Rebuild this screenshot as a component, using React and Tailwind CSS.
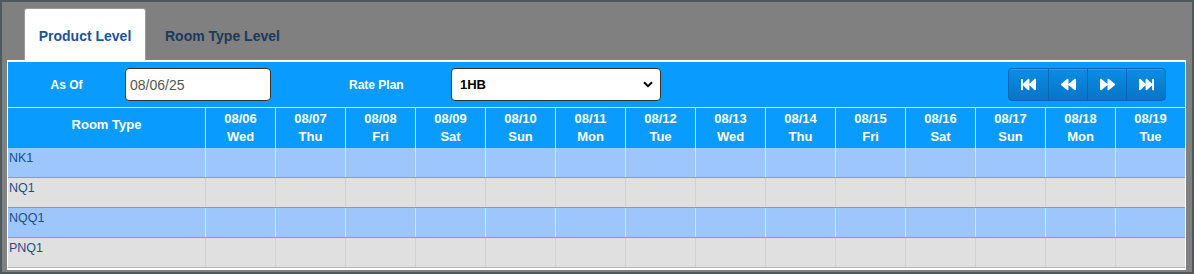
import { FaFastBackward, FaBackward, FaForward, FaFastForward } from "react-icons/fa";

const days = [
  ["08/06", "Wed"],
  ["08/07", "Thu"],
  ["08/08", "Fri"],
  ["08/09", "Sat"],
  ["08/10", "Sun"],
  ["08/11", "Mon"],
  ["08/12", "Tue"],
  ["08/13", "Wed"],
  ["08/14", "Thu"],
  ["08/15", "Fri"],
  ["08/16", "Sat"],
  ["08/17", "Sun"],
  ["08/18", "Mon"],
  ["08/19", "Tue"],
];

const rooms = ["NK1", "NQ1", "NQQ1", "PNQ1"];

const NavButtons = () => {
  const icons = [FaFastBackward, FaBackward, FaForward, FaFastForward];
  return (
    <div className="flex h-[33px] overflow-hidden rounded-[4px] border border-[#0766b3] bg-gradient-to-b from-[#0b8de4] to-[#0674c8] shadow-[inset_0_1px_0_rgba(255,255,255,0.15)]">
      {icons.map((Icon, i) => (
        <button
          key={i}
          className={`flex w-[39px] items-center justify-center text-white ${
            i > 0 ? "border-l border-[#0766b3]" : ""
          }`}
        >
          <Icon size={15} />
        </button>
      ))}
    </div>
  );
};

export default function App() {
  return (
    <div
      className="h-[274px] w-[1194px] border-2 border-[#4e585d] bg-[#808080] pb-[2px] pl-[5px] pr-[6px] pt-[6px] text-[13px]"
      style={{ fontFamily: '"Liberation Sans", Arial, sans-serif' }}
    >
      <div className="flex h-[52px] items-stretch pl-[17px]">
        <div className="flex w-[122px] items-center justify-center rounded-t-[3px] border border-b-0 border-[#9a9a9a] bg-white pt-[4px] text-[14px] font-bold text-[#1b5495]">
          Product Level
        </div>
        <div className="flex items-center pl-[19px] pt-[4px] text-[14px] font-bold text-[#1a3a5e]">
          Room Type Level
        </div>
      </div>

      <div className="border border-t-[2px] border-white bg-white">
        <div className="flex h-[45px] items-center bg-[#0a9bff] font-bold text-white">
          <div className="w-[117px] text-center text-[12px]">As Of</div>
          <input
            readOnly
            value="08/06/25"
            className="h-[33px] w-[146px] rounded-[4px] border border-[#333] bg-white px-[4px] text-[14px] font-normal text-[#555] outline-none"
          />
          <div className="ml-[78px] w-[102px] text-[12px]">Rate Plan</div>
          <div className="flex h-[33px] w-[210px] items-center justify-between rounded-[4px] border border-[#333] bg-white pl-[8px] pr-[7px] text-[13px] font-bold text-black">
            <span>1HB</span>
            <svg width="10" height="7" viewBox="0 0 10 7">
              <path d="M1 1.2 L5 5.2 L9 1.2" fill="none" stroke="#000" strokeWidth="2" />
            </svg>
          </div>
          <div className="ml-auto mr-[19px]">
            <NavButtons />
          </div>
        </div>

        <div className="flex h-[41px] border-t border-[#e3e3e3] bg-[#0a9bff] font-bold text-white">
          <div className="flex w-[197px] justify-center pt-[7px] text-[13px]">Room Type</div>
          {days.map(([d, w]) => (
            <div
              key={d}
              className="flex w-[70px] flex-col items-center justify-center border-l border-[#dcdcdc] text-[13px] leading-[18px]"
            >
              <span>{d}</span>
              <span>{w}</span>
            </div>
          ))}
        </div>

        {rooms.map((r, i) => {
          const blue = i % 2 === 0;
          return (
            <div
              key={r}
              className={`flex h-[30px] border-b ${
                i === rooms.length - 1 ? "border-[#b5b5b5]" : "border-[#999]"
              } ${blue ? "bg-[#9cc6fc]" : "bg-[#e0e0e0]"}`}
            >
              <div className="w-[197px] pl-[1px] pt-[1px] text-[12.5px] text-[#1c4f8d]">{r}</div>
              {days.map(([d]) => (
                <div
                  key={d}
                  className={`w-[70px] border-l ${blue ? "border-[#d4e4f8]" : "border-[#d2d2d2]"}`}
                />
              ))}
            </div>
          );
        })}
        <div className="h-[1px] bg-white" />
      </div>
    </div>
  );
}
